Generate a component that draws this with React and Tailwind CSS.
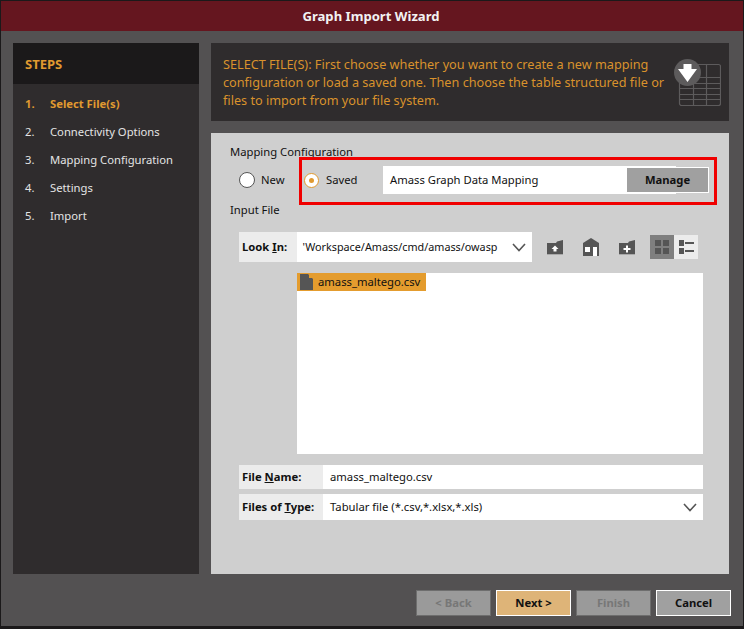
import React from "react";

const font = { fontFamily: '"Noto Sans", sans-serif' };

const steps = ["Select File(s)", "Connectivity Options", "Mapping Configuration", "Settings", "Import"];

function Chevron() {
  return (
    <svg width="14" height="9" viewBox="0 0 14 9" fill="none" stroke="#555" strokeWidth="1.6">
      <path d="M1 1l6 6.5L13 1" />
    </svg>
  );
}

function FolderIcon({ children }) {
  return (
    <svg width="16" height="15" viewBox="0 0 16 15">
      <path d="M0 3h9l1-1.500 6-1.500v14H0z" fill="#555" />
      <path d="M0 14h16v1H0z" fill="#aaa" />
      {children}
    </svg>
  );
}

function Label({ className, children }) {
  return <div className={`flex items-center bg-[#ececec] pl-[3px] text-[11.25px] font-bold text-[#111] ${className}`}>{children}</div>;
}

function FooterButton({ className, children }) {
  return <div className={`flex h-[26px] w-[75px] items-center justify-center border text-[11.25px] font-bold ${className}`}>{children}</div>;
}

export default function App() {
  return (
    <div className="h-[629px] w-[744px] overflow-hidden border-t border-b-[3px] border-x border-[#1b191a] bg-[#535152]" style={font}>
      <div className="flex h-[30px] items-center justify-center bg-[#65161f] pr-[2px] pt-px text-[13.1px] font-bold text-[#f2f2f2]">
        Graph Import Wizard
      </div>

      <div className="flex h-[543px] gap-3 pl-3 pr-[14px] pt-3">
        <aside className="w-[186px] shrink-0 bg-[#2f2c2d]">
          <div className="flex h-[41px] items-center bg-[#1b191a] pl-[12px] pt-[2px] text-[13px] font-bold text-[#e09a30]">STEPS</div>
          <ol className="flex flex-col pt-[6px] text-[11.25px] text-[#e4e4e4]">
            {steps.map((s, i) => (
              <li key={s} className={`flex h-[28px] items-center pl-[12px] ${i === 0 ? "font-bold text-[#e09a30]" : ""}`}>
                <span className="w-[25px]">{i + 1}.</span>
                {s}
              </li>
            ))}
          </ol>
        </aside>

        <div className="flex min-w-0 flex-1 flex-col gap-3">
          <div className="relative h-[78px] bg-[#2f2c2d] pl-[12px] pt-[12px] text-[12.68px] leading-[18px] text-[#d9922c]">
            <div>SELECT FILE(S): First choose whether you want to create a new mapping</div>
            <div>configuration or load a saved one. Then choose the table structured file or</div>
            <div>files to import from your file system.</div>
            <svg className="absolute right-[8px] top-[16px]" width="48" height="47" viewBox="0 0 48 47" fill="none">
              <rect x="6.500" y="5.500" width="41" height="41" rx="2" stroke="#5d5b5c" strokeWidth="1.2" />
              <path d="M6 18.500h42M6 24.500h42M6 29.500h42M6 35.500h42M6 40.500h42M33.500 5v41M20.500 18v28" stroke="#5d5b5c" strokeWidth="1.2" />
              <circle cx="14.500" cy="13.500" r="13.500" fill="#5d5b5c" />
              <path d="M10.500 5h8v5H24l-9.500 13L5 10h5.500z" fill="#fff" />
            </svg>
          </div>

          <main className="relative h-[441px] bg-[#cfcfcf] pl-[19px] text-[11.25px] text-[#111]">
            <div className="flex h-[28px] items-end">Mapping Configuration</div>

            <div className="flex h-[33px] items-center pl-[9px] pt-[5px]">
              <span className="h-[16px] w-[16px] rounded-full border border-[#555] bg-white" />
              <span className="ml-[6px] w-[43px]">New</span>
              <span className="flex h-[15px] w-[15px] items-center justify-center rounded-full border border-[#e09a30] bg-white">
                <span className="h-[5px] w-[5px] rounded-full bg-[#e09a30]" />
              </span>
              <span className="ml-[7px] w-[57px]">Saved</span>
              <div className="relative flex h-[28px] w-[293px] items-center bg-white pl-[7px]">
                Amass Graph Data Mapping
                <div className="absolute left-[243px] top-[1px] flex h-[26px] w-[83px] items-center justify-center border border-white bg-[#a0a0a0] font-bold">
                  Manage
                </div>
              </div>
            </div>

            <div className="flex h-[28px] items-center pt-[5px]">Input File</div>

            <div className="mt-[10px] flex h-[30px] items-center pl-[9px]">
              <Label className="h-[30px] w-[58px]">
                <span>Look <span className="underline">I</span>n:</span>
              </Label>
              <div className="flex h-[30px] w-[235px] items-center justify-between overflow-hidden bg-white pl-[5.500px] pr-[6px]">
                <span className="whitespace-nowrap text-[10.8px]">'Workspace/Amass/cmd/amass/owasp</span>
                <Chevron />
              </div>
              <div className="ml-[15px] flex w-[88px] items-center justify-between">
                <FolderIcon>
                  <path d="M8 5.500l3.500 3.500H9.500v2.500h-3V9H4.500z" fill="#fff" />
                </FolderIcon>
                <svg width="16" height="18" viewBox="0 0 16 18">
                  <path d="M8 0l8 5v13H0V5z" fill="#555" />
                  <rect x="2" y="9" width="5" height="5" fill="#fff" />
                  <rect x="10" y="9" width="4" height="9" fill="#fff" />
                </svg>
                <FolderIcon>
                  <path d="M7 5.500h2V8h2.500v2H9v2.500H7V10H4.500V8H7z" fill="#fff" />
                </FolderIcon>
              </div>
              <div className="ml-[15px] flex h-[24px]">
                <div className="flex w-[24px] items-center justify-center bg-[#7f7f7f]">
                  <svg width="14" height="14" viewBox="0 0 14 14" fill="#555">
                    <rect width="6" height="6" />
                    <rect x="8" width="6" height="6" />
                    <rect y="8" width="6" height="6" />
                    <rect x="8" y="8" width="6" height="6" />
                  </svg>
                </div>
                <div className="flex w-[24px] items-center justify-center bg-[#ececec]">
                  <svg width="15" height="14" viewBox="0 0 15 14" fill="#555">
                    <rect width="5" height="6" />
                    <rect y="8" width="5" height="6" />
                    <rect x="6" y="2" width="9" height="2" />
                    <rect x="6" y="10" width="9" height="2" />
                  </svg>
                </div>
              </div>
            </div>

            <div className="ml-[67px] mt-[11px] h-[181px] w-[406px] bg-white">
              <div className="flex h-[18px] w-[129px] items-center gap-[5px] bg-[#e49c2e] pl-[3px]">
                <svg width="13" height="16" viewBox="0 0 13 16" fill="#555">
                  <path d="M0 0h8l5 5v11H0z" />
                  <path d="M9 0l4 4H9z" fill="#e49c2e" />
                </svg>
                amass_maltego.csv
              </div>
            </div>

            <div className="ml-[9px] mt-[11px] flex h-[24px] w-[464px]">
              <Label className="w-[84px]">
                <span>File <span className="underline">N</span>ame:</span>
              </Label>
              <div className="flex flex-1 items-center bg-white pl-[7px]">amass_maltego.csv</div>
            </div>

            <div className="ml-[9px] mt-[5px] flex h-[26px] w-[464px]">
              <Label className="w-[84px]">
                <span>Files of <span className="underline">T</span>ype:</span>
              </Label>
              <div className="flex flex-1 items-center justify-between bg-white pl-[7px] pr-[6px]">
                Tabular file (*.csv,*.xlsx,*.xls)
                <Chevron />
              </div>
            </div>

            {/* red highlight drawn over the screenshot */}
            <div className="pointer-events-none absolute left-[88px] top-[24px] h-[48px] w-[418px] border-[3px] border-[#f00000]" />
          </main>
        </div>
      </div>

      <div className="flex justify-end gap-[5px] pr-[12px] pt-[16px]">
        <FooterButton className="border-[#6e6e6e] bg-[#9a9a9a] text-[#777]">&lt; Back</FooterButton>
        <FooterButton className="border-white bg-[#deb478] text-[#111]">Next &gt;</FooterButton>
        <FooterButton className="border-[#6e6e6e] bg-[#9a9a9a] text-[#777]">Finish</FooterButton>
        <FooterButton className="border-white bg-[#a0a0a0] text-[#111]">Cancel</FooterButton>
      </div>
    </div>
  );
}
